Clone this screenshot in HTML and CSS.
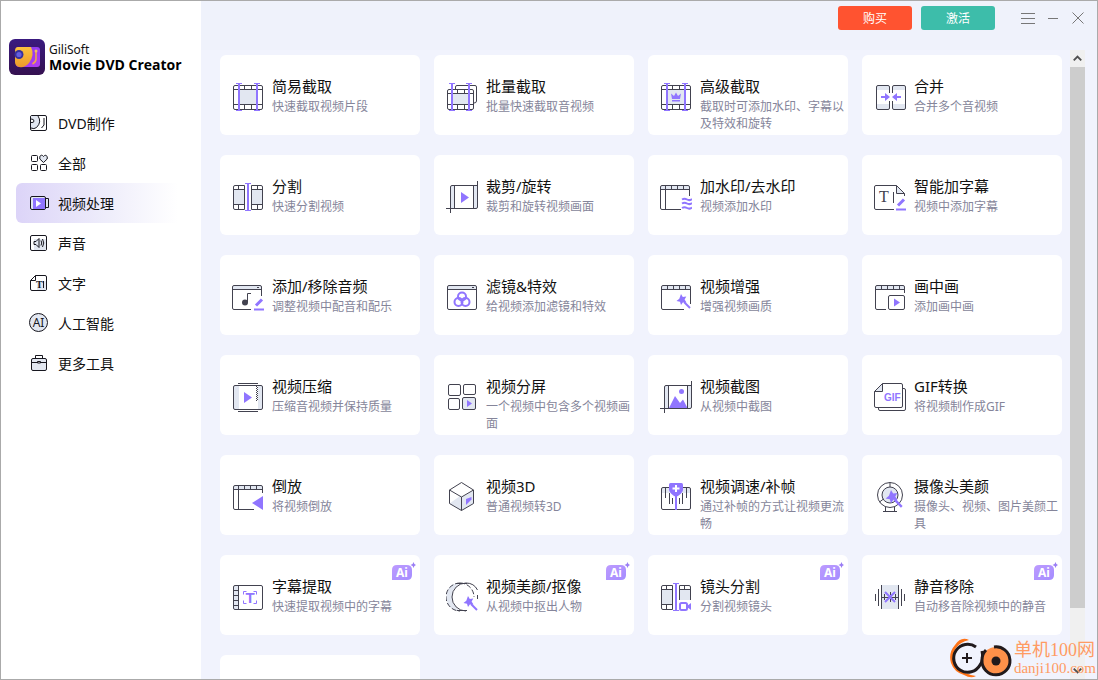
FILE: index.html
```
<!DOCTYPE html>
<html lang="zh-CN">
<head>
<meta charset="utf-8">
<meta name="viewport" content="width=device-width, initial-scale=1">
<title>GiliSoft Movie DVD Creator</title>
<link rel="stylesheet" href="styles.css">
</head>
<body>
<svg class="defs" aria-hidden="true">
  <defs>
    <linearGradient id="badge" x1="0" y1="0" x2="1" y2="1"><stop offset="0" stop-color="#bd9bff"/><stop offset="1" stop-color="#a48cff"/></linearGradient>
    <linearGradient id="plum" x1="0" y1="0" x2="0" y2="1"><stop offset="0" stop-color="#3a1a80"/><stop offset="1" stop-color="#351150"/></linearGradient>
    <linearGradient id="gold" x1="0" y1="0" x2="0" y2="1"><stop offset="0" stop-color="#fbc23e"/><stop offset="1" stop-color="#ec9a2a"/></linearGradient>
    <linearGradient id="magenta" x1="0" y1="0" x2="1" y2="1"><stop offset="0" stop-color="#7c3cf5"/><stop offset="1" stop-color="#b53cf2"/></linearGradient>
    <symbol id="ai-badge" viewBox="0 0 24 18">
      <path d="M5 3H14.500Q20 3 20 8V13Q20 18 15 18H0V8Q0 3 5 3Z" fill="url(#badge)"/>
      <text x="4" y="15" class="t-badge">Ai</text>
      <path d="M21.500 0L22.400 2.100L24 3L22.400 3.900L21.500 6L20.600 3.900L18.500 3L20.600 2.100Z" fill="#9a7df5"/>
    </symbol>
    <symbol id="pencil" viewBox="0 0 32 32"><path d="M24 24.500L30 18.500" class="p3"/><path d="M22 28.500H32" class="p2"/></symbol>
    <symbol id="wand" viewBox="0 0 15 15"><path d="M8 8L14 14" class="p2"/><path d="M5 0L6.800 3L10.300 2.500L8.600 5.500L10.500 8.500L7 8.200L5 11L4 7.800L0.500 7L3.300 4.800Z" class="pf"/></symbol>
  </defs>
</svg>
<div class="window">
  <aside class="sidebar">
    <div class="brand">
      <svg class="logo" viewBox="0 0 36 36" aria-hidden="true">
        <rect width="36" height="36" rx="6" fill="url(#plum)"/>
        <rect x="7" y="8" width="24" height="20" rx="3" fill="url(#magenta)"/>
        <path d="M9 8H22Q26 16 20 24Q16 29 10 28Q6 27 6 23V12Q6 8 9 8Z" fill="url(#gold)"/>
        <circle cx="10" cy="15.500" r="4.500" fill="#35309c"/><circle cx="10" cy="15.500" r="2.600" fill="#655de0"/>
        <path d="M27 13V20Q27 23 23.500 25" fill="none" stroke="#efa64a" stroke-width="1.600"/><circle cx="27" cy="12" r="1.500" fill="#f2c05b"/>
      </svg>
      <div><div class="maker">GiliSoft</div><div class="product">Movie DVD Creator</div></div>
    </div>
    <nav class="nav">
      <button type="button"><svg viewBox="0 0 20 20"><rect x="1.500" y="2.500" width="16" height="15" rx="1.500" class="d"/><path d="M8.500 3Q13.500 9 8 14Q5 17 2 15V9Q5 11 5 8Q4 5.500 2 6V3Z" class="g"/><path d="M9 3Q13 9 7.500 14.500Q5 16.500 2 15M2 6Q5 6 5 8Q5 10 2 9.500M15 5V12L12.500 15" class="d"/></svg><span>DVD制作</span></button>
      <button type="button"><svg viewBox="0 0 20 20"><rect x="2.500" y="2.500" width="6" height="6" rx="1" class="d"/><rect x="2.500" y="11.500" width="6" height="6" rx="1" class="d"/><rect x="11.500" y="11.500" width="6" height="6" rx="1" class="d"/><path d="M14.500 9.500L10.800 6Q10 2.500 12.500 2.200Q13.800 2.300 14.500 3.500Q15.300 2.200 16.800 2.300Q19 3 18.200 6Z" class="dg"/></svg><span>全部</span></button>
      <button type="button" class="active" aria-current="page"><svg viewBox="0 0 20 20"><path d="M16 5.500H19.500V14.500H16" class="dg"/><rect x="1.500" y="3.500" width="15" height="13" rx="1.500" class="dg"/><rect x="4" y="5" width="12" height="11" class="pf"/><path d="M7 7L12 10.500L7 14Z" fill="#fff"/></svg><span>视频处理</span></button>
      <button type="button"><svg viewBox="0 0 20 20"><rect x="1.500" y="2.500" width="16" height="15" rx="1.500" class="d"/><path d="M5 6H17V17H5Z" class="g"/><path d="M5 8.500H7L10 5.500V14.500L7 11.500H5ZM12 7.500Q13.500 10 12 12.500M13.500 6Q16 10 13.500 14" class="d"/></svg><span>声音</span></button>
      <button type="button"><svg viewBox="0 0 20 20"><path d="M6.500 2.500H16Q17.500 2.500 17.500 4V16Q17.500 17.500 16 17.500H3Q1.500 17.500 1.500 16V7.500Z" class="d"/><path d="M8 8H17V17H8Z" class="g"/><path d="M1.500 7.500H6.500V2.500M14.500 8V15" class="d"/><text x="7" y="15" class="t-nav-serif">T</text></svg><span>文字</span></button>
      <button type="button"><svg viewBox="0 0 20 20"><circle cx="9.500" cy="9.500" r="9" class="dg"/><text x="9.500" y="14" text-anchor="middle" class="t-ai">AI</text></svg><span>人工智能</span></button>
      <button type="button"><svg viewBox="0 0 20 20"><path d="M6.500 5V2.500H13.500V5" class="d"/><rect x="2.500" y="5.500" width="15" height="12" rx="1.500" class="dg"/><path d="M2.500 9.500H8M12 9.500H17.500M8.500 8.500H11.500V10H8.500Z" class="d"/></svg><span>更多工具</span></button>
    </nav>
  </aside>

  <main class="main">
    <header class="topbar">
      <button type="button" class="pill buy">购买</button>
      <button type="button" class="pill activate">激活</button>
      <button type="button" class="win menu" aria-label="菜单"><svg viewBox="0 0 16 16"><path d="M1 3.500H15M1 8.500H15M1 13.500H15"/></svg></button>
      <button type="button" class="win" aria-label="最小化"><svg viewBox="0 0 16 16"><path d="M3 8.500H13"/></svg></button>
      <button type="button" class="win" aria-label="关闭"><svg viewBox="0 0 16 16"><path d="M2.500 2.500L13.500 13.500M13.500 2.500L2.500 13.500"/></svg></button>
    </header>

    <div class="scroller">
      <div class="grid">
        <button type="button" class="card"><svg viewBox="0 0 32 32"><rect x="7" y="8" width="18" height="16" class="g"/><rect x="1.500" y="4.500" width="29" height="24" rx="1.500" class="k"/><path d="M1.500 8.500H30.500M1.500 23.500H30.500M12.500 4.500V8.500M19.500 4.500V8.500M12.500 23.500V28.500M19.500 23.500V28.500" class="k"/><path d="M7 2V30M25 2V30" class="p2"/><path d="M4 2.500H10M4 29.500H10M22 2.500H28M22 29.500H28" class="p1"/></svg><span class="text"><span class="title">简易截取</span><span class="desc">快速截取视频片段</span></span></button>
        <button type="button" class="card"><svg viewBox="0 0 32 32"><path d="M9.500 8V6Q9.500 4.500 11 4.500H29Q30.500 4.500 30.500 6V20Q30.500 22 28 22" class="k"/><rect x="6" y="12" width="17" height="12" class="g"/><rect x="1.500" y="8.500" width="26" height="20" rx="1.500" class="k"/><path d="M1.500 12.500H27.500M1.500 23.500H27.500M11.500 8.500V12.500M18.500 8.500V12.500M11.500 23.500V28.500M18.500 23.500V28.500" class="k"/><path d="M6 2V30M23 2V30" class="p2"/><path d="M3 2.500H9M3 29.500H9M20 2.500H26M20 29.500H26" class="p1"/></svg><span class="text"><span class="title">批量截取</span><span class="desc">批量快速截取音视频</span></span></button>
        <button type="button" class="card"><svg viewBox="0 0 32 32"><rect x="7" y="8" width="18" height="16" class="g"/><rect x="1.500" y="4.500" width="29" height="24" rx="1.500" class="k"/><path d="M1.500 8.500H30.500M1.500 23.500H30.500M12.500 4.500V8.500M19.500 4.500V8.500M12.500 23.500V28.500M19.500 23.500V28.500" class="k"/><path d="M7 2V30M25 2V30" class="p2"/><path d="M4 2.500H10M4 29.500H10M22 2.500H28M22 29.500H28" class="p1"/><path d="M11 12.500L14 15L16 11.500L18 15L21 12.500L20 18H12ZM12 19H20V20.500H12Z" class="pf"/></svg><span class="text"><span class="title">高级截取</span><span class="desc">截取时可添加水印、字幕以及特效和旋转</span></span></button>
        <button type="button" class="card"><svg viewBox="0 0 32 32"><path d="M3 5H15V9H3ZM3 23H15V28H3ZM19 5H31V9H19ZM19 23H31V28H19Z" class="g"/><path d="M15.500 12V6Q15.500 4.500 14 4.500H4Q2.500 4.500 2.500 6V27Q2.500 28.500 4 28.500H14Q15.500 28.500 15.500 27V20M18.500 12V6Q18.500 4.500 20 4.500H30Q31.500 4.500 31.500 6V27Q31.500 28.500 30 28.500H20Q18.500 28.500 18.500 27V20" class="k"/><path d="M7 15H11V12L16 16L11 20V17H7ZM27 15H23V12L18 16L23 20V17H27Z" class="pf"/></svg><span class="text"><span class="title">合并</span><span class="desc">合并多个音视频</span></span></button>

        <button type="button" class="card"><svg viewBox="0 0 32 32"><path d="M2 9H13V23H2ZM20 9H30V23H20Z" class="g"/><path d="M12.500 4.500H3Q1.500 4.500 1.500 6V27Q1.500 28.500 3 28.500H12.500ZM19.500 4.500H29Q30.500 4.500 30.500 6V27Q30.500 28.500 29 28.500H19.500ZM1.500 8.500H12.500M1.500 23.500H12.500M19.500 8.500H30.500M19.500 23.500H30.500M6.500 4.500V8.500M6.500 23.500V28.500M25.500 4.500V8.500M25.500 23.500V28.500" class="k"/><path d="M16 2V30" class="p2"/><path d="M13 2.500H19M13 29.500H19" class="p1"/></svg><span class="text"><span class="title">分割</span><span class="desc">快速分割视频</span></span></button>
        <button type="button" class="card"><svg viewBox="0 0 32 32"><path d="M5 5H8V27H5ZM28 5H31V27H28Z" class="g"/><path d="M4.500 32V6Q4.500 4.500 6 4.500H31.500M0 27.500H30Q31.500 27.500 31.500 26V0M8.500 4.500V27.500M27.500 4.500V27.500" class="k"/><path d="M15 11L23 16.500L15 22Z" class="pf"/></svg><span class="text"><span class="title">裁剪/旋转</span><span class="desc">裁剪和旋转视频画面</span></span></button>
        <button type="button" class="card"><svg viewBox="0 0 32 32"><path d="M1 5H30V8H1Z" class="g"/><path d="M21 28.500H2Q0.500 28.500 0.500 27V6Q0.500 4.500 2 4.500H28Q29.500 4.500 29.500 6V15M0.500 8.500H29.500M5.500 4.500V28.500M11.500 4.500V8.500M17.500 4.500V8.500M23.500 4.500V8.500" class="k"/><path d="M22 18.500Q24.500 17 27 18.500T32 18M22 22.500Q24.500 21 27 22.500T32 22M22 27Q24.500 25.500 27 27T32 26.500" class="p2"/></svg><span class="text"><span class="title">加水印/去水印</span><span class="desc">视频添加水印</span></span></button>
        <button type="button" class="card"><svg viewBox="0 0 32 32"><path d="M22.500 4.500V12.500H30.500Z" class="g"/><path d="M20 28.500H2Q0.500 28.500 0.500 27V6Q0.500 4.500 2 4.500H22.500L30.500 12.500V15M22.500 4.500V12.500H30.500M19.500 11V22" class="k"/><text x="5" y="21" class="t-serif">T</text><use href="#pencil" width="32" height="32"/></svg><span class="text"><span class="title">智能加字幕</span><span class="desc">视频中添加字幕</span></span></button>

        <button type="button" class="card"><svg viewBox="0 0 32 32"><path d="M1 5H30V8H1Z" class="g"/><path d="M19 28.500H2Q0.500 28.500 0.500 27V6Q0.500 4.500 2 4.500H28Q29.500 4.500 29.500 6V15M0.500 8.500H29.500M25 6.500H27M15.500 21V12.500H19" class="k"/><circle cx="13" cy="21.500" r="3" fill="#42424f"/><use href="#pencil" width="32" height="32"/></svg><span class="text"><span class="title">添加/移除音频</span><span class="desc">调整视频中配音和配乐</span></span></button>
        <button type="button" class="card"><svg viewBox="0 0 32 32"><path d="M2 5H30V8H2Z" class="g"/><rect x="1.500" y="4.500" width="29" height="24" rx="1.500" class="k"/><path d="M1.500 8.500H30.500M26 6.500H28" class="k"/><circle cx="16" cy="15.500" r="4" class="p2"/><circle cx="12.500" cy="21" r="4" class="p2"/><circle cx="19.500" cy="21" r="4" class="p2"/></svg><span class="text"><span class="title">滤镜&amp;特效</span><span class="desc">给视频添加滤镜和特效</span></span></button>
        <button type="button" class="card"><svg viewBox="0 0 32 32"><path d="M2 5H30V8H2Z" class="g"/><path d="M24 28.500H3Q1.500 28.500 1.500 27V6Q1.500 4.500 3 4.500H29Q30.500 4.500 30.500 6V23M1.500 8.500H30.500M7.500 4.500V8.500M13.500 4.500V8.500M19.500 4.500V8.500M25.500 4.500V8.500" class="k"/><use href="#wand" x="16" y="13" width="15" height="15"/></svg><span class="text"><span class="title">视频增强</span><span class="desc">增强视频画质</span></span></button>
        <button type="button" class="card"><svg viewBox="0 0 32 32"><path d="M2 5H30V8H2Z" class="g"/><path d="M12 28.500H3Q1.500 28.500 1.500 27V6Q1.500 4.500 3 4.500H29Q30.500 4.500 30.500 6V12M1.500 8.500H30.500M7.500 4.500V8.500M13.500 4.500V8.500M19.500 4.500V8.500M25.500 4.500V8.500" class="k"/><rect x="14.500" y="14.500" width="16" height="14" rx="1.500" class="k"/><path d="M20 17.500L26 21.500L20 25.500Z" class="pf"/></svg><span class="text"><span class="title">画中画</span><span class="desc">添加画中画</span></span></button>

        <button type="button" class="card"><svg viewBox="0 0 32 32"><path d="M2 5H7V28H2ZM26 5H30V28H26Z" class="g"/><rect x="1.500" y="4.500" width="29" height="24" rx="1.500" class="k"/><path d="M6 2.500H26M6 30.500H26" class="k"/><path d="M24.500 5V20M25.500 6V20" class="k" stroke-dasharray="1 1"/><path d="M12 11L20 16.500L12 22Z" class="pf"/></svg><span class="text"><span class="title">视频压缩</span><span class="desc">压缩音视频并保持质量</span></span></button>
        <button type="button" class="card"><svg viewBox="0 0 32 32"><rect x="2.500" y="3.500" width="12" height="11" rx="1.500" class="k"/><rect x="17.500" y="3.500" width="12" height="10" rx="1.500" class="k"/><rect x="2.500" y="17.500" width="11" height="11" rx="1.500" class="k"/><rect x="16.500" y="16.500" width="13" height="12" rx="1.500" class="kg"/><path d="M21 19L26 22.500L21 26Z" class="pf"/></svg><span class="text"><span class="title">视频分屏</span><span class="desc">一个视频中包含多个视频画面</span></span></button>
        <button type="button" class="card"><svg viewBox="0 0 32 32"><path d="M5 5H8V27H5ZM28 5H31V27H28Z" class="g"/><path d="M9 27L15 15L20 22L23 18.500L27 26V27Z" class="pf"/><circle cx="21.500" cy="10.500" r="2.500" class="pf"/><path d="M4.500 32V6Q4.500 4.500 6 4.500H31.500M0 27.500H30Q31.500 27.500 31.500 26V0M8.500 4.500V27.500M27.500 4.500V27.500" class="k"/></svg><span class="text"><span class="title">视频截图</span><span class="desc">从视频中截图</span></span></button>
        <button type="button" class="card"><svg viewBox="0 0 32 32"><path d="M8.500 2.500V10.500H0.500Z" class="g"/><path d="M8.500 2.500H27Q28.500 2.500 28.500 4V25Q28.500 26.500 27 26.500H2Q0.500 26.500 0.500 25V10.500ZM8.500 2.500V10.500H0.500M28.500 7.500H30Q31.500 7.500 31.500 9V28Q31.500 29.500 30 29.500H6Q4.500 29.500 4.500 28V26.500" class="k"/><text x="10" y="20" class="t-gif">GIF</text></svg><span class="text"><span class="title">GIF转换</span><span class="desc">将视频制作成GIF</span></span></button>

        <button type="button" class="card"><svg viewBox="0 0 32 32"><path d="M2 5H30V8H2Z" class="g"/><path d="M22 28.500H3Q1.500 28.500 1.500 27V6Q1.500 4.500 3 4.500H29Q30.500 4.500 30.500 6V12M1.500 8.500H30.500M6.500 4.500V28.500M12.500 4.500V8.500M18.500 4.500V8.500M24.500 4.500V8.500" class="k"/><path d="M31 15V29L20 22Z" class="pf"/></svg><span class="text"><span class="title">倒放</span><span class="desc">将视频倒放</span></span></button>
        <button type="button" class="card"><svg viewBox="0 0 32 32"><path d="M15.500 16V29.500L3.500 22.500L15.500 14ZM27.500 9.500V22.500L15.500 29.500V16Z" class="g"/><path d="M15.500 1.500L27.500 9V22.500L15.500 29.500L3.500 22.500V9ZM3.500 9L15.500 16L27.500 9M15.500 16V29.500" class="k"/><path d="M20 18L25.500 16V18.500L20 24Z" class="pf"/></svg><span class="text"><span class="title">视频3D</span><span class="desc">普通视频转3D</span></span></button>
        <button type="button" class="card"><svg viewBox="0 0 32 32"><path d="M2 7H10V12H2ZM22 7H30V12H22Z" class="g"/><path d="M9 6.500H3Q1.500 6.500 1.500 8V27Q1.500 28.500 3 28.500H29Q30.500 28.500 30.500 27V8Q30.500 6.500 29 6.500H23M5.500 6.500V17M9.500 12V23M12.500 17V23M19.500 17V23M22.500 12V23M26.500 6.500V17" class="k"/><path d="M10.500 2H21.500Q23 2 23 3.500V9Q22 13 16 16Q10 13 9 9V3.500Q9 2 10.500 2Z" class="pf"/><path d="M16 15V29" class="p2"/><path d="M16 4V11M12.500 7.500H19.500" stroke="#fff" stroke-width="2"/></svg><span class="text"><span class="title">视频调速/补帧</span><span class="desc">通过补帧的方式让视频更流畅</span></span></button>
        <button type="button" class="card"><svg viewBox="0 0 32 32"><circle cx="16" cy="14" r="12.500" class="k"/><circle cx="16" cy="14" r="8" class="kg"/><path d="M16 1.500V6M5.500 21L9.500 18M11.500 25.500V30M20.500 25.500V30M9 30.500H23" class="k"/><use href="#wand" x="11" y="9" width="18" height="18"/></svg><span class="text"><span class="title">摄像头美颜</span><span class="desc">摄像头、视频、图片美颜工具</span></span></button>

        <button type="button" class="card"><svg viewBox="0 0 32 32"><path d="M2 5H6V28H2Z" class="g"/><rect x="1.500" y="4.500" width="29" height="24" rx="1.500" class="k"/><path d="M6.500 4.500V28.500M1.500 9.500H6.500M1.500 14.500H6.500M1.500 19.500H6.500M1.500 24.500H6.500" class="k"/><path d="M11.500 13.500V10.500H14.500M21.500 10.500H24.500V13.500M24.500 19.500V22.500H21.500M14.500 22.500H11.500V19.500" class="p1"/><text x="18" y="22" text-anchor="middle" class="t-sans">T</text></svg><span class="text"><span class="title">字幕提取</span><span class="desc">快速提取视频中的字幕</span></span><svg class="badge" role="img" aria-label="Ai"><use href="#ai-badge"/></svg></button>
        <button type="button" class="card"><svg viewBox="0 0 32 32"><path d="M14 2Q0 3 0.500 16Q1 29 14 30Q6 24 6 16Q6 7 14 2Z" class="g"/><path d="M14 2A14 14 0 0 0 14 30M14 2A14 14 0 0 1 28 16" class="k" stroke-dasharray="5 2"/><path d="M20 30A14 14 0 0 1 20 2Q28 2 31.500 9M31.500 14V18M11 2.500H21M11 29.500H21" class="k"/><use href="#wand" x="17" y="15" width="15" height="15"/></svg><span class="text"><span class="title">视频美颜/抠像</span><span class="desc">从视频中抠出人物</span></span><svg class="badge" role="img" aria-label="Ai"><use href="#ai-badge"/></svg></button>
        <button type="button" class="card"><svg viewBox="0 0 32 32"><path d="M2 9H12V23H2ZM20 9H30V19H20Z" class="g"/><path d="M12.500 4.500H3Q1.500 4.500 1.500 6V27Q1.500 28.500 3 28.500H12.500ZM19.500 19V4.500H29Q30.500 4.500 30.500 6V19M1.500 8.500H12.500M1.500 23.500H12.500M19.500 8.500H30.500M6.500 4.500V8.500M6.500 23.500V28.500M24.500 4.500V8.500" class="k"/><path d="M16 2V30" class="p2"/><path d="M13 2.500H19M13 29.500H19" class="p1"/><rect x="20" y="22" width="7" height="7" rx="1.500" class="p2"/><path d="M27 25L31 22V29L27 26Z" class="pf"/></svg><span class="text"><span class="title">镜头分割</span><span class="desc">分割视频镜头</span></span><svg class="badge" role="img" aria-label="Ai"><use href="#ai-badge"/></svg></button>
        <button type="button" class="card"><svg viewBox="0 0 32 32"><path d="M8 4H24V28H8Z" class="g"/><path d="M1.500 13V20M4.500 8V25M7.500 4V28M24.500 4V28M27.500 8V25M30.500 13V20M10.500 13V19M21.500 13V19M16.500 11V14M16.500 18V21M8 16.500H24" class="k"/><path d="M11 11L21 21M21 11L11 21" class="p2"/></svg><span class="text"><span class="title">静音移除</span><span class="desc">自动移音除视频中的静音</span></span><svg class="badge" role="img" aria-label="Ai"><use href="#ai-badge"/></svg></button>

        <div class="card"></div>
      </div>
      <div class="scrollbar" aria-hidden="true">
        <svg viewBox="0 0 16 16"><path d="M4 10L8 6L12 10"/></svg>
        <div class="track"><div class="thumb"></div></div>
        <svg viewBox="0 0 16 16"><path d="M4 6L8 10L12 6"/></svg>
      </div>
    </div>
  </main>

  <div class="watermark">
    <svg viewBox="0 0 64 42" aria-hidden="true">
      <path d="M20 3Q12 -1 6 8Q-1 16 2 26Q5 35 15 38Q22 42 27 39Q14 37 8 29Q2 19 7 11Q11 5 20 3Z" fill="#ff7418"/>
      <path d="M27 10A14 14 0 1 0 31 28Q35 23 33 14" fill="none" stroke="#211a1c" stroke-width="3"/>
      <path d="M18 16V26M13 21H23" stroke="#211a1c" stroke-width="2"/>
      <circle cx="47" cy="24" r="14" fill="#ff9149"/>
      <path d="M45 10A14 14 0 1 1 33 23Q33 17 37 13" fill="none" stroke="#211a1c" stroke-width="3"/>
      <circle cx="47" cy="24" r="4.500" fill="#211a1c"/>
    </svg>
    <div><div class="site">单机100网</div><div class="domain">danji100.com</div></div>
  </div>
</div>
</body>
</html>
```
FILE: styles.css
```
* { box-sizing: border-box; }
body { margin: 0; font-family: "Noto Sans", "Noto Sans CJK SC", sans-serif; color: #111; }
button { border: 0; padding: 0; margin: 0; background: none; font: inherit; color: inherit; text-align: left; cursor: pointer; }
.defs { position: absolute; width: 0; height: 0; }

.window { position: relative; display: flex; height: 100vh; overflow: hidden; border: 1px solid #aaa; background: #fff; }

.sidebar { flex: 0 0 200px; padding: 38px 15px 0 8px; }
.brand { display: flex; gap: 4px; height: 64px; white-space: nowrap; }
.logo { flex: none; width: 36px; height: 36px; }
.maker { margin-top: 4px; font-size: 12px; line-height: 14px; }
.product { font-family: "Open Sans", "Noto Sans", sans-serif; font-size: 14px; line-height: 16px; font-weight: 700; color: #000; }
.nav { display: flex; flex-direction: column; padding-left: 7px; }
.nav button { display: flex; align-items: center; gap: 9px; height: 40px; padding-left: 13px; border-radius: 6px; font-size: 14px; line-height: 20px; }
.nav span { padding-top: 2px; }
.nav svg { flex: none; width: 20px; height: 20px; overflow: visible; }
.nav .active { background: linear-gradient(90deg, #dcd4f8, #efeefb 55%, #fff 95%); }

.main { flex: 1; min-width: 0; display: flex; flex-direction: column; background: #f1f3fd; }
.topbar { flex: none; display: flex; justify-content: flex-end; gap: 9px; height: 49px; padding: 5px 11px 0 0; background: #eff2fb; }
.pill { width: 74px; height: 24px; padding-top: 1px; border-radius: 3px; color: #fff; font-size: 12px; line-height: 23px; text-align: center; }
.buy { background: #ff5330; }
.activate { background: #3dbdaa; }
.win { width: 16px; height: 24px; display: flex; align-items: center; }
.menu { margin-left: 16px; }
.win svg { width: 16px; height: 16px; fill: none; stroke: #777; }

.scroller { flex: 1; min-height: 0; display: flex; gap: 8px; padding-right: 12px; overflow: hidden; }
.grid { flex: 1; min-width: 0; display: grid; grid-template-columns: repeat(4, minmax(0, 1fr)); grid-auto-rows: minmax(80px, max-content); gap: 20px 14px; padding: 5px 0 0 19px; }
.card { position: relative; display: flex; align-items: flex-start; gap: 8px; padding: 21px 3px 0 12px; border-radius: 6px; background: #fff; }
.card > svg:first-child { flex: none; width: 32px; height: 32px; margin-top: 5px; }
.text { display: block; min-width: 0; }
.title { display: block; font-size: 15px; line-height: 20px; }
.desc { display: block; margin-top: 2px; font-size: 12px; line-height: 17px; color: #85859a; }
.card .badge { position: absolute; top: 7px; right: 4px; width: 24px; height: 18px; }

.scrollbar { flex: none; display: flex; flex-direction: column; width: 15px; background: #f0f0f0; }
.scrollbar svg { flex: none; width: 15px; height: 17px; fill: none; stroke: #505050; stroke-width: 2; }
.track { flex: 1; min-height: 0; }
.thumb { height: 91%; background: #cdcdcd; }

.watermark { position: absolute; right: 1px; bottom: 0; display: flex; align-items: flex-start; gap: 1px; color: #ff9b63; white-space: nowrap; }
.watermark svg { width: 64px; height: 42px; }
.site { padding-top: 2px; font: 18px/22px "Liberation Serif", "Noto Sans CJK SC", serif; }
.domain { font: 15px/15px "Liberation Serif", serif; }

.k, .kg, .d, .dg { fill: none; stroke: #42424f; stroke-width: 1; }
.d, .dg { stroke: #17171f; }
.kg, .dg { fill: #e2e7f1; }
.g { fill: #e2e7f1; }
.pf { fill: #9075ff; }
.p1, .p2, .p3 { fill: none; stroke: #9075ff; stroke-width: 1; }
.p2 { stroke-width: 2; }
.p3 { stroke-width: 3; }
.t-serif { font: 16px "Liberation Serif", serif; fill: #42424f; }
.t-nav-serif { font: bold 10px "Liberation Serif", serif; fill: #17171f; }
.t-ai { font: 12px "Noto Sans", sans-serif; fill: #17171f; }
.t-gif { font: bold 10px "Liberation Sans", sans-serif; fill: #9075ff; }
.t-sans { font: bold 15px "Liberation Sans", sans-serif; fill: #9075ff; }
.t-badge { font: bold 12px "Noto Sans", sans-serif; fill: #fff; }
```
